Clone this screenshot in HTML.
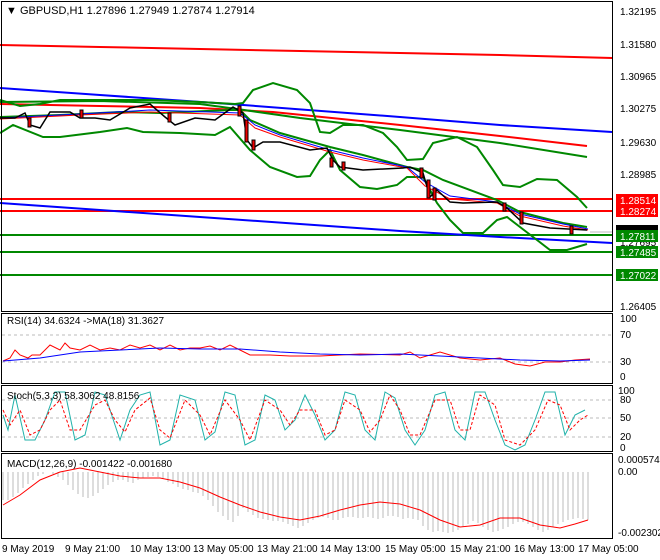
<!DOCTYPE html>
<html><head><style>
body{margin:0;background:#fff;}
svg{display:block;font-family:"Liberation Sans",sans-serif;font-size:10px;}
</style></head><body>
<svg width="660" height="560" viewBox="0 0 660 560">
<rect width="660" height="560" fill="#fff"/>
<g fill="none">
<polyline points="0,45 100,47 200,49 300,51 400,53 500,55 612,58" stroke="#f00" stroke-width="2"/>
<polyline points="0,88 100,95 230,104 400,117 500,125 612,132" stroke="#00f" stroke-width="2"/>
<polyline points="0,104 100,106 200,108 273,112 400,125 500,136 587,146" stroke="#f00" stroke-width="2"/>
<polyline points="0,102 100,101 200,104 237,109 300,118 400,130 500,143 587,157" stroke="#080" stroke-width="2"/>
<line x1="0" y1="199" x2="612" y2="199" stroke="#f00" stroke-width="2"/>
<line x1="0" y1="211" x2="612" y2="211" stroke="#f00" stroke-width="2"/>
<line x1="590" y1="232" x2="612" y2="232" stroke="#bbb"/>
<line x1="0" y1="235" x2="612" y2="235" stroke="#080" stroke-width="2"/>
<line x1="0" y1="252" x2="612" y2="252" stroke="#080" stroke-width="2"/>
<line x1="0" y1="275" x2="612" y2="275" stroke="#080" stroke-width="2"/>
<polyline points="0,203 100,210 200,217 300,224 400,231 500,237 612,243" stroke="#00f" stroke-width="2"/>
<!-- bollinger upper -->
<polyline points="0,100 20,106 40,104 60,100 100,100 150,100 200,102 235,104 243,103 253,90 273,83 297,90 310,103 320,132 330,133 343,125 363,125 383,133 397,147 407,160 423,159 433,143 457,137 477,147 493,170 503,185 520,187 537,179 557,180 577,197 587,208" stroke="#080" stroke-width="2"/>
<!-- bollinger lower -->
<polyline points="0,133 13,125 43,137 60,137 100,132 127,128 143,132 180,133 215,135 230,127 250,150 270,167 297,177 310,176 320,160 330,150 340,170 360,187 377,189 397,185 407,177 423,177 437,203 450,220 463,233 483,233 497,220 507,217 520,227 537,240 550,250 567,250 587,244" stroke="#080" stroke-width="2"/>
<!-- middle -->
<polyline points="0,117 60,115 120,112 160,113 230,110 240,110 250,120 280,133 330,147 363,155 407,167 423,170 443,180 497,200 520,212 563,223 587,227" stroke="#080" stroke-width="2"/>
<polyline points="0,118 80,114 150,110 240,113 255,125 280,135 330,150 363,158 407,167 425,182 450,196 497,202 520,214 563,224 588,229" stroke="#00f" stroke-width="1"/>
<polyline points="0,119 80,115 150,112 240,115 255,128 280,137 330,152 363,160 407,168 425,186 450,199 497,203 520,216 563,226 588,230" stroke="#f00" stroke-width="1"/>
<!-- price -->
<polyline points="0,118 15,118 25,113 30,125 40,128 50,112 70,112 80,118 95,118 110,120 130,108 150,104 165,117 175,125 195,118 215,120 233,107 243,113 247,140 253,148 263,142 280,142 310,150 327,148 333,160 340,167 363,170 403,168 410,167 423,173 430,197 437,190 450,202 463,203 497,202 507,208 523,223 550,228 587,230" stroke="#000" stroke-width="1.5"/>
</g>
<g fill="#e00" stroke="#000" stroke-width="1">
<rect x="28" y="118" width="3" height="9"/><rect x="80" y="110" width="3" height="8"/><rect x="168" y="113" width="3" height="9"/>
<rect x="238" y="106" width="3" height="10"/><rect x="245" y="120" width="3" height="22"/><rect x="252" y="140" width="3" height="10"/>
<rect x="330" y="158" width="3" height="9"/><rect x="342" y="162" width="3" height="8"/><rect x="420" y="168" width="3" height="10"/>
<rect x="427" y="180" width="3" height="18"/><rect x="433" y="188" width="3" height="12"/><rect x="503" y="203" width="3" height="8"/>
<rect x="520" y="212" width="3" height="12"/><rect x="570" y="226" width="3" height="8"/>
</g>
<rect x="1.5" y="1.5" width="611" height="310" fill="none" stroke="#000"/>
<text x="6" y="14" font-size="11">▼ GBPUSD,H1  1.27896 1.27949 1.27874 1.27914</text>
<g font-size="10">
<text x="620" y="15">1.32195</text><text x="620" y="48">1.31580</text><text x="620" y="80">1.30965</text>
<text x="620" y="112">1.30275</text><text x="620" y="146">1.29630</text><text x="620" y="178">1.28985</text>
<text x="620" y="310">1.26405</text><text x="620" y="246">1.27695</text>
<rect x="616" y="194" width="42" height="12" fill="#f00"/><text x="620" y="204" fill="#fff">1.28514</text>
<rect x="616" y="205" width="42" height="12" fill="#f00"/><text x="620" y="215" fill="#fff">1.28274</text>
<rect x="616" y="225" width="42" height="6" fill="#000"/>
<rect x="616" y="230" width="42" height="12" fill="#080"/><text x="620" y="240" fill="#fff">1.27811</text>
<rect x="616" y="246" width="42" height="12" fill="#080"/><text x="620" y="256" fill="#fff">1.27485</text>
<rect x="616" y="269" width="42" height="12" fill="#080"/><text x="620" y="279" fill="#fff">1.27022</text>
</g>
<!-- RSI -->
<rect x="1.5" y="313.5" width="611" height="70" fill="none" stroke="#000"/>
<g stroke="#bbb" stroke-dasharray="3,3"><line x1="2" y1="335" x2="612" y2="335"/><line x1="2" y1="362" x2="612" y2="362"/></g>
<polyline fill="none" stroke="#f00" points="3,361 10,358 15,350 20,355 28,358 32,355 40,355 50,345 60,350 65,343 70,348 80,350 90,345 100,350 110,348 120,350 130,345 140,348 150,345 160,350 170,345 180,350 190,348 200,348 210,346 220,350 230,345 240,350 250,355 270,355 290,356 320,356 360,354 400,355 410,352 420,358 440,352 460,358 480,360 500,358 515,364 530,366 545,362 560,362 575,360 590,359"/>
<polyline fill="none" stroke="#00f" points="3,361 40,358 80,352 120,350 160,348 200,349 240,349 280,352 320,354 360,355 400,354 440,356 480,358 520,360 560,361 590,360"/>
<text x="7" y="324">RSI(14) 34.6324  -&gt;MA(18) 31.3627</text>
<g font-size="10"><text x="620" y="322">100</text><text x="620" y="338">70</text><text x="620" y="365">30</text><text x="620" y="380">0</text></g>
<!-- Stoch -->
<rect x="1.5" y="385.5" width="611" height="66" fill="none" stroke="#000"/>
<g stroke="#bbb" stroke-dasharray="3,3"><line x1="2" y1="400" x2="612" y2="400"/><line x1="2" y1="418" x2="612" y2="418"/><line x1="2" y1="437" x2="612" y2="437"/></g>
<polyline fill="none" stroke="#20b2aa" points="3,415 8,430 15,395 25,440 35,440 45,420 55,392 65,392 75,440 85,435 95,392 105,395 115,425 120,440 130,410 140,395 150,392 160,445 170,440 180,395 195,400 205,440 215,432 225,392 235,395 245,445 255,440 265,395 275,400 285,430 295,420 305,395 315,415 325,440 335,430 345,392 355,395 365,430 375,440 385,392 395,398 405,430 415,445 425,430 435,395 445,392 455,430 465,440 475,392 485,392 495,420 505,445 515,450 525,445 535,420 545,392 555,392 565,435 575,415 585,410"/>
<polyline fill="none" stroke="#f00" stroke-dasharray="3,2" points="3,410 10,425 20,410 30,435 40,430 50,410 60,400 70,430 80,430 95,405 105,400 115,420 125,432 135,410 150,398 160,430 170,438 185,400 200,415 210,435 225,400 240,420 250,440 265,400 280,410 290,425 300,410 315,410 325,435 335,430 345,400 360,410 370,432 380,420 390,395 400,410 410,435 420,435 435,400 450,400 460,430 470,430 480,395 495,405 505,440 520,445 535,430 548,400 560,405 570,430 580,420 588,415"/>
<text x="7" y="399">Stoch(5,3,3) 58.3062 48.8156</text>
<g font-size="10"><text x="618" y="394">100</text><text x="620" y="403">80</text><text x="620" y="421">50</text><text x="620" y="440">20</text><text x="620" y="451">0</text></g>
<!-- MACD -->
<rect x="1.5" y="453.5" width="611" height="85" fill="none" stroke="#000"/>
<g stroke="#bbb" stroke-width="1">
<path d="M3 472V500M8 472V500M13 472V497M18 472V493M23 472V488M28 472V484M33 472V480M38 472V476M43 472V474M48 472V472M53 472V474M58 472V477M63 472V480M68 472V485M73 472V490M78 472V494M83 472V497M88 472V498M93 472V496M98 472V493M103 472V489M108 472V485M113 472V482M118 472V480M123 472V480M128 472V482M133 472V483M138 472V480M143 472V478M148 472V477M153 472V476M158 472V477M163 472V479M168 472V482M173 472V484M178 472V487M183 472V489M188 472V490M193 472V492M198 472V493M203 472V496M208 472V500M213 472V506M218 472V512M223 472V516M228 472V520M233 472V522M238 472V516M243 472V508M248 472V512M253 472V515M258 472V518M263 472V519M268 472V520M273 472V521M278 472V521M283 472V522M288 472V524M293 472V526M298 472V528M303 472V526M308 472V523M313 472V520M318 472V518M323 472V517M328 472V518M333 472V520M338 472V520M343 472V518M348 472V517M353 472V517M358 472V518M363 472V518M368 472V517M373 472V518M378 472V519M383 472V518M388 472V516M393 472V516M398 472V517M403 472V519M408 472V518M413 472V519M418 472V520M423 472V526M428 472V530M433 472V532M438 472V531M443 472V532M448 472V533M453 472V532M458 472V530M463 472V527M468 472V524M473 472V521M478 472V523M483 472V527M488 472V530M493 472V532M498 472V531M503 472V529M508 472V527M513 472V524M518 472V522M523 472V522M528 472V524M533 472V527M538 472V530M543 472V532M548 472V530M553 472V527M558 472V524M563 472V522M568 472V520M573 472V519M578 472V518M583 472V519M588 472V520"/>
</g>
<polyline fill="none" stroke="#f00" points="3,505 20,495 40,480 60,472 80,468 100,472 120,476 140,478 160,478 180,482 200,488 220,497 240,505 260,512 280,517 300,520 320,516 340,510 360,505 380,502 400,504 420,510 440,520 460,527 480,525 500,518 520,518 540,525 560,528 575,524 588,520"/>
<text x="7" y="467">MACD(12,26,9) -0.001422 -0.001680</text>
<g font-size="10"><text x="618" y="463">0.000574</text><text x="618" y="475">0.00</text><text x="618" y="536">-0.002302</text></g>
<g font-size="10">
<text x="2" y="552">9 May 2019</text><text x="65" y="552">9 May 21:00</text><text x="130" y="552">10 May 13:00</text>
<text x="193" y="552">13 May 05:00</text><text x="257" y="552">13 May 21:00</text><text x="320" y="552">14 May 13:00</text>
<text x="385" y="552">15 May 05:00</text><text x="450" y="552">15 May 21:00</text><text x="514" y="552">16 May 13:00</text>
<text x="578" y="552">17 May 05:00</text>
</g>
</svg>
</body></html>
